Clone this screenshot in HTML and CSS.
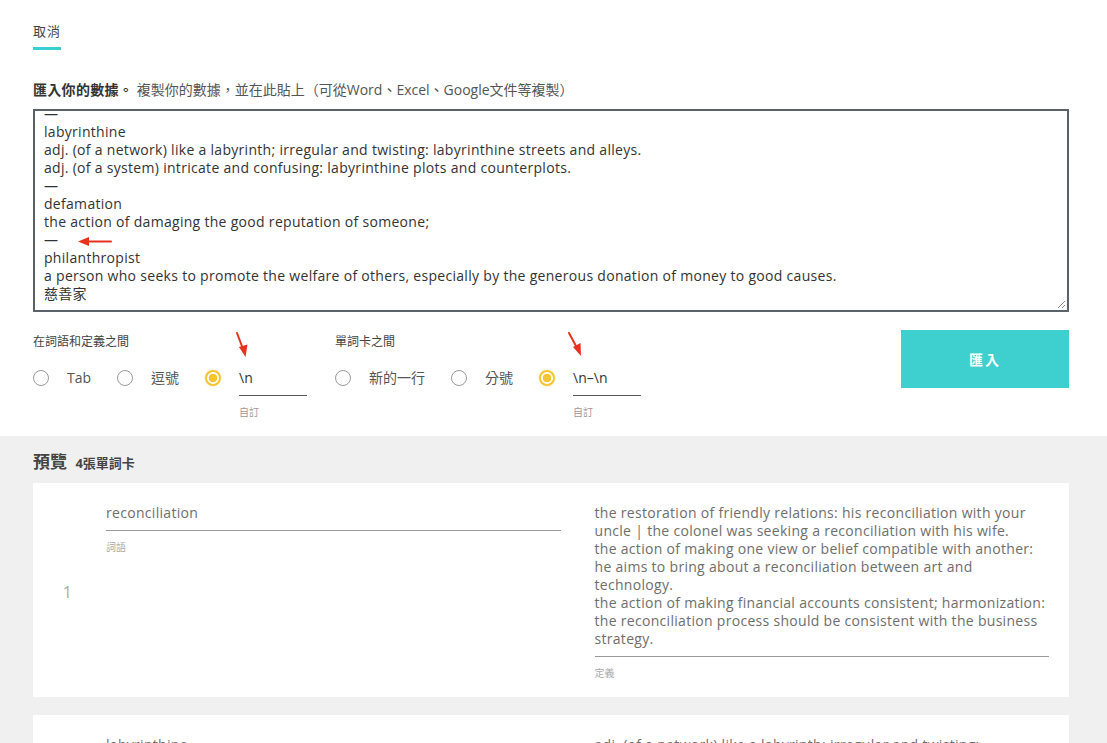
FILE: index.html
```html
<!DOCTYPE html>
<html lang="zh-Hant">
<head>
<meta charset="utf-8">
<title>匯入</title>
<link rel="stylesheet" href="styles.css">
</head>
<body>
<div class="page">
  <section class="import">
    <div class="tabs"><span class="tab">取消</span></div>
    <p class="intro"><strong>匯入你的數據。</strong> 複製你的數據，並在此貼上（可從Word、Excel、Google文件等複製）</p>
    <div class="paste-box">
      <div class="paste-text">—
labyrinthine
adj. (of a network) like a labyrinth; irregular and twisting: labyrinthine streets and alleys.
adj. (of a system) intricate and confusing: labyrinthine plots and counterplots.
—
defamation
the action of damaging the good reputation of someone;
—
philanthropist
a person who seeks to promote the welfare of others, especially by the generous donation of money to good causes.
慈善家</div>
      <svg class="resize" width="10" height="10" viewBox="0 0 10 10"><path d="M9 2 L2 9 M9 6 L6 9" stroke="#888" stroke-width="1" fill="none"/></svg>
    </div>
    <div class="options">
      <div class="group">
        <div class="group-title">在詞語和定義之間</div>
        <div class="choices">
          <div class="choice"><span class="radio"></span><span class="choice-label">Tab</span></div>
          <div class="choice"><span class="radio"></span><span class="choice-label">逗號</span></div>
          <div class="choice"><span class="radio checked"></span>
            <div class="custom"><div class="custom-input">\n</div><div class="custom-label">自訂</div></div>
          </div>
        </div>
      </div>
      <div class="group">
        <div class="group-title">單詞卡之間</div>
        <div class="choices">
          <div class="choice"><span class="radio"></span><span class="choice-label">新的一行</span></div>
          <div class="choice"><span class="radio"></span><span class="choice-label">分號</span></div>
          <div class="choice"><span class="radio checked"></span>
            <div class="custom"><div class="custom-input">\n–\n</div><div class="custom-label">自訂</div></div>
          </div>
        </div>
      </div>
      <button class="import-btn">匯入</button>
    </div>
  </section>
  <section class="preview">
    <h2 class="preview-title">預覽 <span class="count">4張單詞卡</span></h2>
    <div class="card">
      <div class="num">1</div>
      <div class="field">
        <div class="field-text">reconciliation</div>
        <div class="field-label">詞語</div>
      </div>
      <div class="field">
        <div class="field-text">the restoration of friendly relations: his reconciliation with your uncle | the colonel was seeking a reconciliation with his wife.<br>the action of making one view or belief compatible with another: he aims to bring about a reconciliation between art and technology.<br>the action of making financial accounts consistent; harmonization: the reconciliation process should be consistent with the business strategy.</div>
        <div class="field-label">定義</div>
      </div>
    </div>
    <div class="card">
      <div class="num">2</div>
      <div class="field">
        <div class="field-text">labyrinthine</div>
        <div class="field-label">詞語</div>
      </div>
      <div class="field">
        <div class="field-text">adj. (of a network) like a labyrinth; irregular and twisting: labyrinthine streets and alleys.<br>adj. (of a system) intricate and confusing: labyrinthine plots and counterplots.</div>
        <div class="field-label">定義</div>
      </div>
    </div>
  </section>
  <svg class="annotations" width="1107" height="743" viewBox="0 0 1107 743">
    <g stroke="#e8321e" stroke-width="2" fill="#e8321e" stroke-linecap="round">
      <line x1="111" y1="241.5" x2="86" y2="241.5"/>
      <polygon points="78,241.5 89,237 89,246" stroke="none"/>
      <line x1="237" y1="333" x2="243" y2="349"/>
      <polygon points="245.5,357 239,347 247.5,344.5" stroke="none"/>
      <line x1="569" y1="333" x2="577" y2="348"/>
      <polygon points="581,356 573,347 580.5,343" stroke="none"/>
    </g>
  </svg>
</div>
</body>
</html>
```

FILE: styles.css
```css
* { box-sizing: border-box; }
html, body { margin: 0; padding: 0; }
body {
  font-family: "Open Sans", "Noto Sans CJK TC", sans-serif;
  color: #333;
  background: #f0f0f0;
}
.page { position: relative; overflow: hidden; height: 743px; }

.import {
  background: #fff;
  padding: 22px 38px 17px 33px;
}
.tabs { display: flex; }
.tab {
  font-size: 13px;
  line-height: 18px;
  letter-spacing: 1px;
  color: #444;
  padding-bottom: 7px;
  border-bottom: 3px solid #3ccfcf;
}
.intro {
  margin: 31px 0 10px;
  font-size: 14px;
  line-height: 18px;
  color: #555;
}
.intro strong { color: #333; font-weight: 700; letter-spacing: 0.3px; }

.paste-box {
  position: relative;
  height: 203px;
  border: 2px solid #5b6268;
  padding: 0 9px;
  overflow: hidden;
  background: #fff;
}
.paste-text {
  margin-top: -6px;
  white-space: pre-wrap;
  font-size: 14px;
  line-height: 18px;
  letter-spacing: 0.3px;
  color: #333;
}
.resize { position: absolute; right: 1px; bottom: 1px; }

.options {
  display: flex;
  align-items: flex-start;
  gap: 28px;
  margin-top: 18px;
}
.group { padding-top: 4px; }
.group-title {
  font-size: 12px;
  line-height: 16px;
  color: #444;
}
.choices {
  display: flex;
  margin-top: 18px;
}
.choice {
  display: flex;
  align-items: flex-start;
  gap: 18px;
  margin-right: 26px;
}
.choice:last-child { margin-right: 0; }
.radio {
  width: 16px;
  height: 16px;
  margin-top: 2px;
  border: 1.5px solid #9a9a9a;
  border-radius: 50%;
  flex: none;
  background: #fff;
}
.radio.checked {
  border: 2px solid #f6c431;
  background: radial-gradient(circle, #f6c431 0 4px, #fff 4.6px);
  box-shadow: 0 0 2px rgba(246, 196, 49, 0.5);
}
.choice-label {
  font-size: 14px;
  line-height: 20px;
  color: #555;
}
.custom { width: 68px; }
.custom-input {
  font-size: 14px;
  line-height: 20px;
  color: #333;
  padding-bottom: 7px;
  border-bottom: 1px solid #555;
}
.custom-label {
  margin-top: 9px;
  font-size: 10px;
  line-height: 14px;
  color: #999;
}
.import-btn {
  margin-left: auto;
  width: 168px;
  height: 58px;
  border: none;
  background: #3ecfcf;
  color: #fff;
  font-family: inherit;
  font-size: 14px;
  font-weight: 700;
  letter-spacing: 2px;
  cursor: pointer;
}

.preview { padding: 16px 38px 0 33px; }
.preview-title {
  margin: 0 0 10px;
  font-size: 17px;
  line-height: 20px;
  font-weight: 700;
  color: #444;
}
.count { font-size: 13px; margin-left: 4px; }

.card {
  display: grid;
  grid-template-columns: 37px 1fr 1fr;
  column-gap: 34px;
  background: #fff;
  padding: 21px 20px 17px 2px;
  margin-bottom: 18px;
}
.num {
  align-self: center;
  text-align: right;
  font-size: 16px;
  color: #aaa;
}
.field-text {
  font-size: 14px;
  line-height: 18px;
  letter-spacing: 0.3px;
  color: #6e6e6e;
  padding-bottom: 8px;
  border-bottom: 1px solid #999;
}
.field-label {
  margin-top: 9px;
  font-size: 10px;
  line-height: 14px;
  color: #aaa;
}
.annotations { position: absolute; top: 0; left: 0; pointer-events: none; }
```
